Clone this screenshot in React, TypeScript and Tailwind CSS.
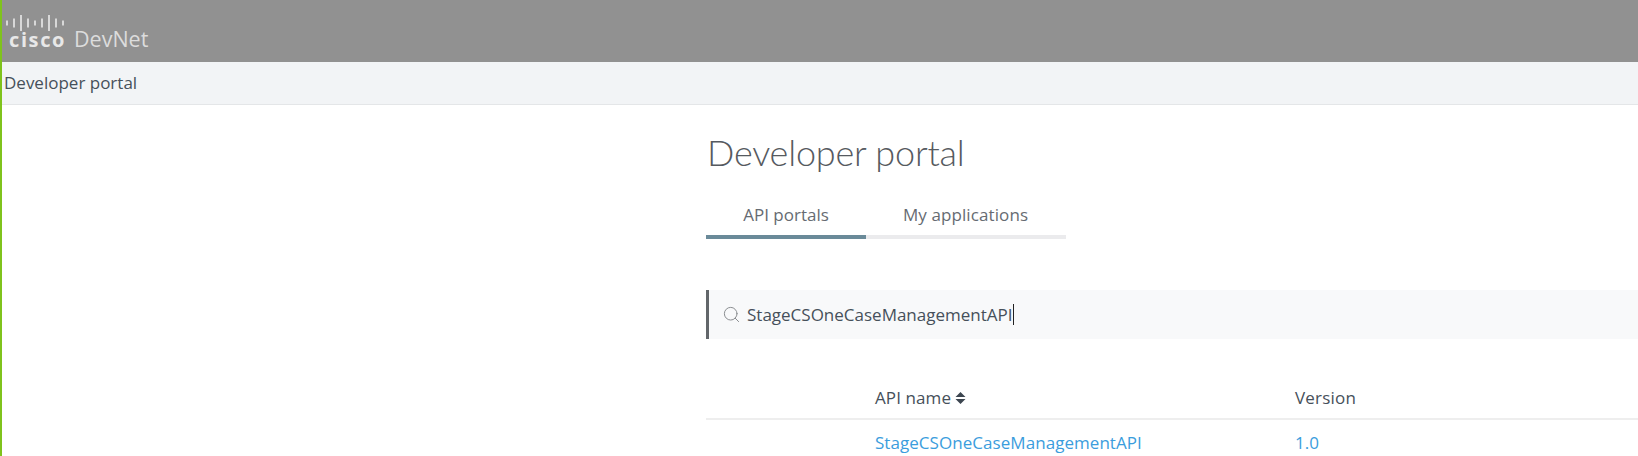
import { Search } from "lucide-react";

const bars = [5, 9, 16, 9, 5, 9, 16, 9, 5];

function CiscoLogo() {
  return (
    <div className="flex flex-col items-center w-[60px]">
      <svg width="60" height="16" viewBox="0 0 60 16" className="block">
        {bars.map((h, i) => (
          <rect key={i} x={1 + i * 7} y={(16 - h) / 2} width="2" height={h} fill="#d8d8d8" />
        ))}
      </svg>
      <span className="font-['Open_Sans',sans-serif] font-bold text-[20px] leading-[20px] text-[#e8e8e8] tracking-[1.6px] -mt-[1px] ml-[5px]">
        cisco
      </span>
    </div>
  );
}

export default function App() {
  return (
    <div className="h-[456px] overflow-hidden bg-white border-l-2 border-[#7fc31c] font-['Open_Sans',sans-serif] text-[#333]">
      <header className="h-[62px] bg-[#919191] flex items-start pt-[15px] pl-[3px] gap-[9px]">
        <CiscoLogo />
        <span className="font-['Open_Sans',sans-serif] text-[21.5px] leading-[24px] mt-[12px] text-[#dcdcdc]">DevNet</span>
      </header>
      <div className="h-[43px] bg-[#f2f4f6] border-b border-[#e4e6e8] flex items-center pl-[2px] text-[17px] text-[#46505a]">
        Developer portal
      </div>

      <main className="pl-[704px]">
        <h1 className="font-['Lato',sans-serif] font-light text-[36px] leading-[44px] tracking-[-0.2px] text-[#565a60] pl-[1px] pt-[25px]">
          Developer portal
        </h1>

        <div className="flex mt-[20px] w-[360px] h-[45px] border-b-4 border-[#ebebed] text-[17px] text-[#666b72]">
          <div className="w-[160px] h-[45px] border-b-4 border-[#6a8a99] flex items-center justify-center">API portals</div>
          <div className="w-[200px] h-[41px] flex items-center justify-center pr-[1px] tracking-[0.1px]">My applications</div>
        </div>

        <div className="mt-[51px] h-[49px] bg-[#f8f9fa] border-l-[3px] border-[#62666a] flex items-center pl-[13px]">
          <Search size={19} strokeWidth={1.25} className="text-[#8a8d90]" />
          <span className="ml-[6px] text-[17px] text-[#46505a]">StageCSOneCaseManagementAPI</span>
          <span className="w-[1.5px] h-[21px] bg-[#222]" />
        </div>

        <div className="grid grid-cols-[420px_1fr] pl-[169px] h-[35px] mt-[46px] border-b-2 border-[#eeeeee] items-start text-[17px] font-medium text-[#46505a]">
          <div className="flex items-center gap-[4px] tracking-[0.1px]">
            API name
            <svg width="11" height="14" viewBox="0 0 11 14">
              <path d="M5.5 1 L10.5 6 H0.5 Z M5.5 13 L10.5 8 H0.5 Z" fill="#3d4650" />
            </svg>
          </div>
          <div className="tracking-[0.2px]">Version</div>
        </div>

        <div className="grid grid-cols-[420px_1fr] pl-[169px] pt-[15px] text-[17px] leading-[16px] text-[#3b9ddd]">
          <div className="tracking-[0.05px]">StageCSOneCaseManagementAPI</div>
          <div>1.0</div>
        </div>
      </main>
    </div>
  );
}
